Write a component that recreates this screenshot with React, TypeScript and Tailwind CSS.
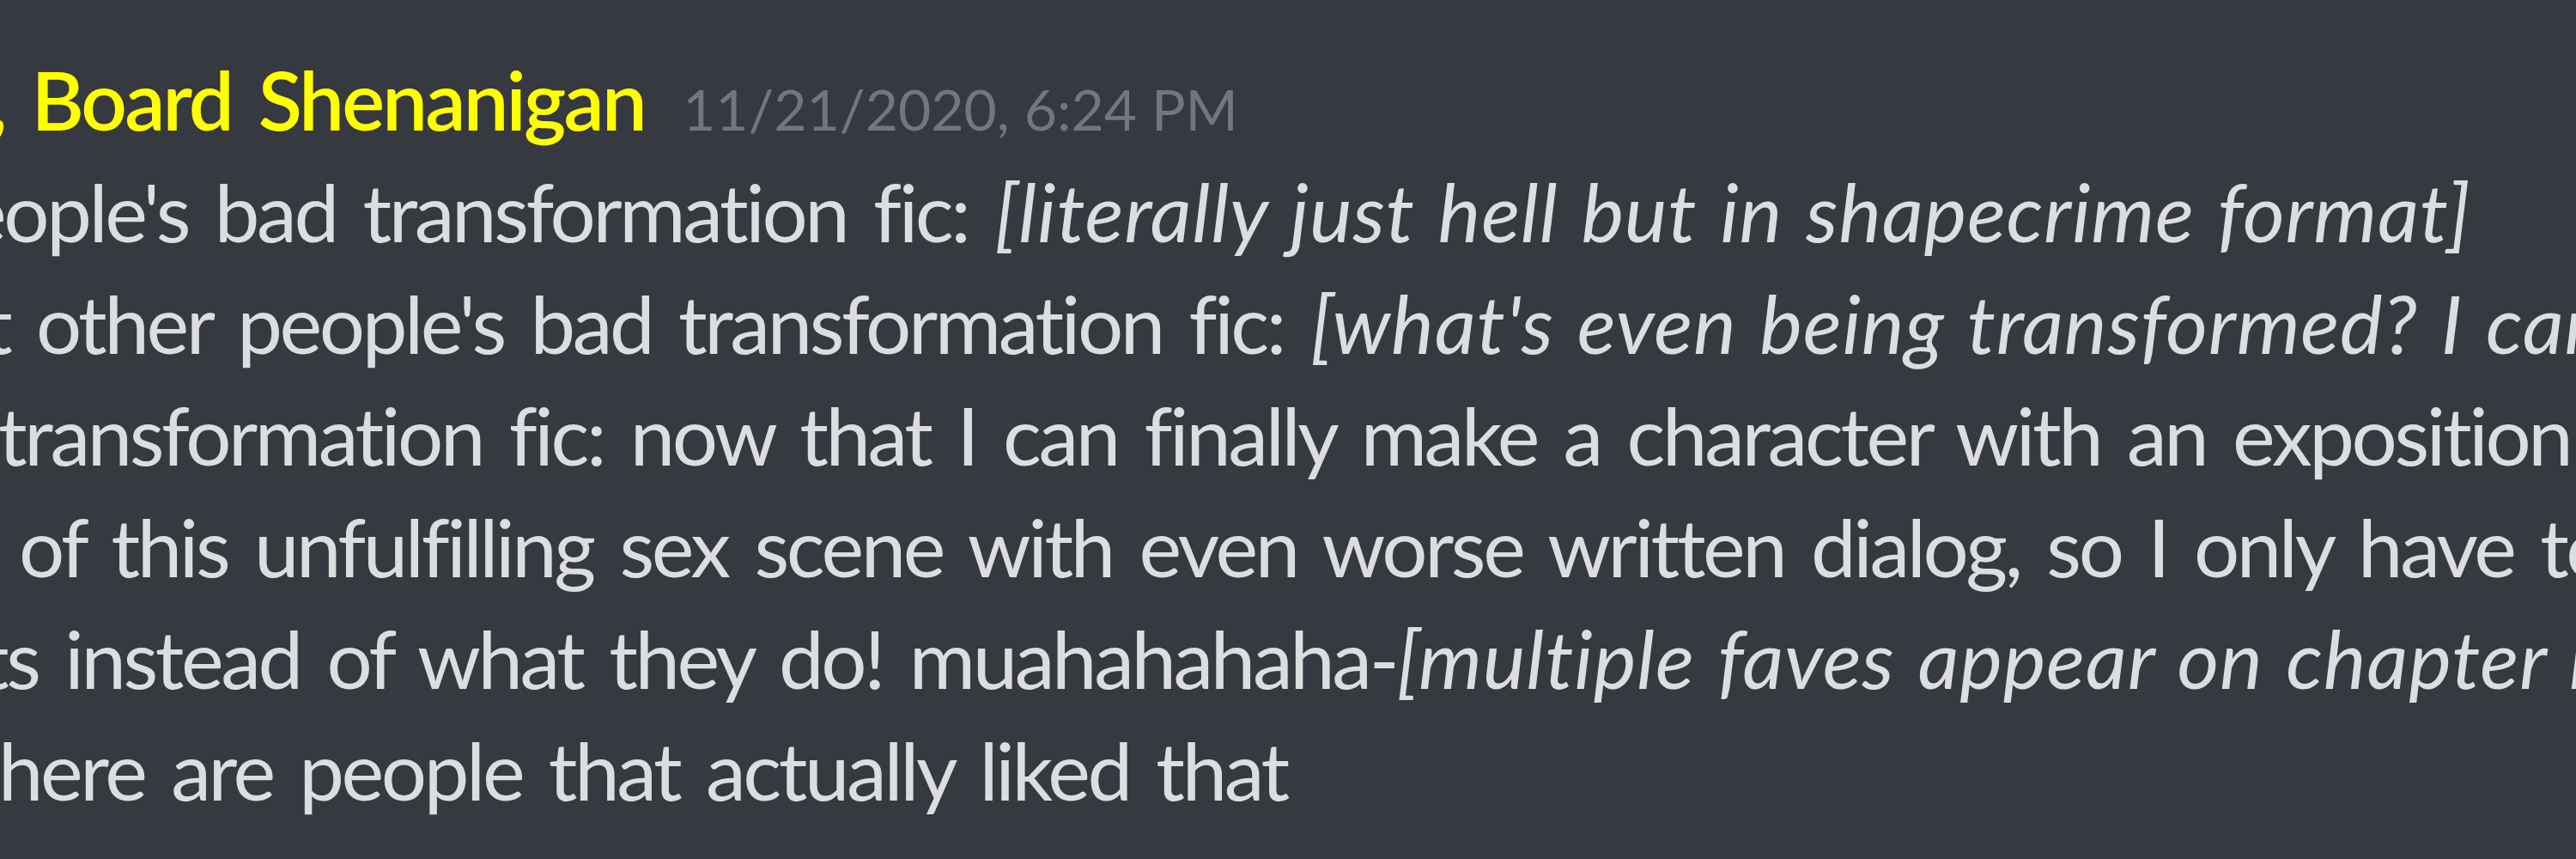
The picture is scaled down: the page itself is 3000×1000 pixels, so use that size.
const lines: { ml: string; parts: { t: string; i?: boolean }[] }[] = [
  {
    ml: "ml-[-42px]",
    parts: [
      { t: "eople's bad transformation fic: " },
      { t: "[literally just hell but in shapecrime format]", i: true },
    ],
  },
  {
    ml: "ml-[-19px]",
    parts: [
      { t: "t other people's bad transformation fic: " },
      { t: "[what's even being transformed? I can't even tell]", i: true },
    ],
  },
  {
    ml: "ml-[-2px]",
    parts: [
      {
        t: "transformation fic: now that I can finally make a character with an exposition dump",
      },
    ],
  },
  {
    ml: "ml-[-46px]",
    parts: [
      {
        t: "s of this unfulfilling sex scene with even worse written dialog, so I only have to write",
      },
    ],
  },
  {
    ml: "ml-[-23px]",
    parts: [
      { t: "ts instead of what they do! muahahahaha-" },
      { t: "[multiple faves appear on chapter list]", i: true },
    ],
  },
  {
    ml: "ml-[-2px]",
    parts: [{ t: "here are people that actually liked that" }],
  },
];

export default function App() {
  return (
    <div className="h-[1000px] w-[3000px] overflow-hidden bg-[#36393f] font-['Lato',sans-serif] [font-variant-ligatures:none]">
      <div className="flex flex-col pt-[51px]">
        <div className="whitespace-nowrap text-[94px] leading-[130px] tracking-[-0.03em] [word-spacing:10px] ml-[-13px]">
          <span className="font-semibold text-[#ffff00]">, Board Shenanigan</span>
          <span className="ml-[44px] text-[66px] leading-none tracking-normal [word-spacing:0px] text-[#72767d]">
            11/21/2020, 6:24 PM
          </span>
        </div>
        {lines.map((line, idx) => (
          <div
            key={idx}
            className={`whitespace-nowrap text-[94px] leading-[130px] tracking-[-0.036em] [word-spacing:10px] text-[#dcddde] ${line.ml}`}
          >
            {line.parts.map((p, j) =>
              p.i ? (
                <em key={j} className="italic tracking-[0.008em] [word-spacing:4px]">
                  {p.t}
                </em>
              ) : (
                <span key={j}>{p.t}</span>
              )
            )}
          </div>
        ))}
      </div>
    </div>
  );
}
